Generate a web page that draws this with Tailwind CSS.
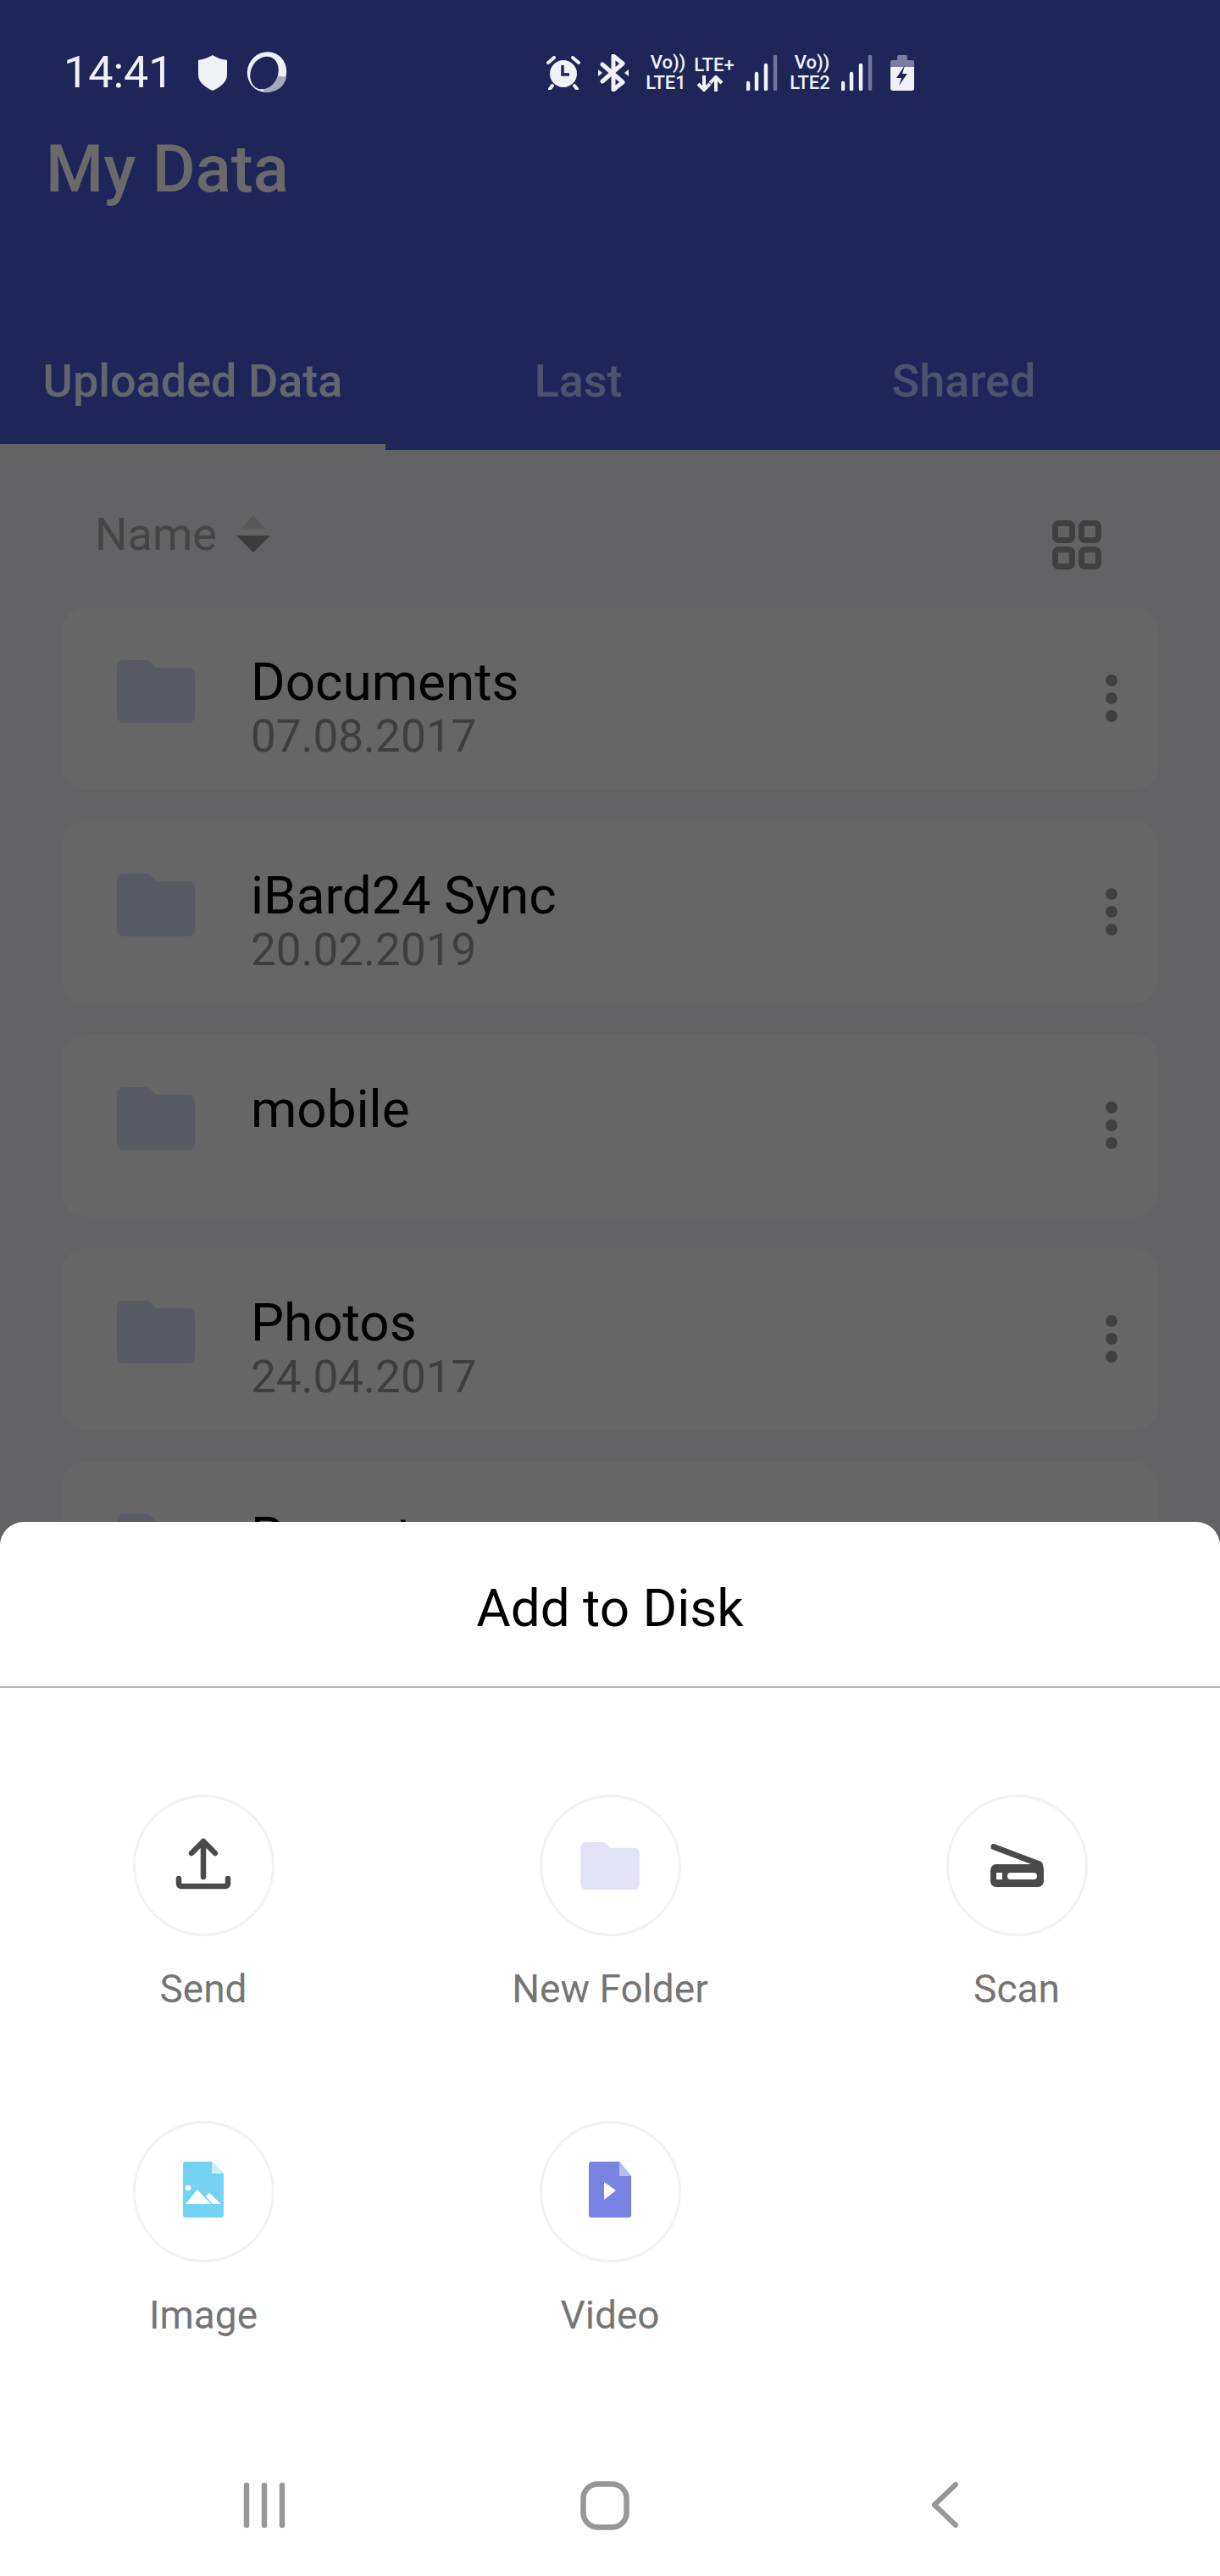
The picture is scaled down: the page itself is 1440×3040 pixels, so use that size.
<!DOCTYPE html>
<html lang="en">
<head>
    <meta charset="UTF-8">
    <meta name="viewport" content="width=device-width, initial-scale=1.0">
    <title>My Data</title>
    <script src="https://cdn.jsdelivr.net/npm/@tailwindcss/browser@4"></script>
</head>
<body class="relative w-[1440px] h-[3040px] overflow-hidden bg-[#636365] font-['Roboto',sans-serif]">

    <!-- header, dimmed by the sheet -->
    <header class="h-[531px] bg-[#1f2559] flex flex-col">
        <div class="h-[64px] mt-[54px] pl-[75px] flex items-center text-[#f1f2f8]">
            <span class="text-[52px] leading-none w-[159px]">14:41</span>
            <svg class="w-[34px] h-[42px]" viewBox="0 0 34 42" fill="#f1f2f8"><path d="M17 0c5 3 10 5 17 6v17c0 9-8 15-17 19C8 38 0 32 0 23V6c7-1 12-3 17-6z"/></svg>
            <svg class="ml-[21px] w-[50px] h-[50px]" viewBox="0 0 50 50">
                <ellipse cx="26" cy="24" rx="23" ry="24" transform="rotate(25 26 24)" fill="#eef0f7"/>
                <path d="M24 26L49 30C47 42 36 49 22 48z" fill="#a4a7c0"/>
                <ellipse cx="23" cy="25" rx="16" ry="20" transform="rotate(25 23 25)" fill="#1f2559"/>
            </svg>
            <div class="ml-[306px] flex items-center relative h-[64px]">
                <!-- alarm -->
                <svg class="w-[40px] h-[40px]" viewBox="0 0 40 40" fill="#f1f2f8">
                    <circle cx="20" cy="21" r="16"/>
                    <path d="M2 8l7-6M38 8l-7-6M7 35l-3 4M33 35l3 4" stroke="#f1f2f8" stroke-width="4" stroke-linecap="round"/>
                    <path d="M19 11v11h8" stroke="#1f2559" stroke-width="3.5" fill="none"/>
                </svg>
                <!-- bluetooth -->
                <svg class="ml-[21px] w-[36px] h-[44px]" viewBox="0 0 36 44" fill="none" stroke="#f1f2f8" stroke-width="5" stroke-linejoin="round" stroke-linecap="round">
                    <path d="M5 12l24 21-11 9V2l11 9L5 32"/>
                    <path d="M0 18v8l5-4zM36 18v8l-5-4z" fill="#f1f2f8" stroke="none"/>
                </svg>
                <div class="ml-[19px] w-[50px] flex flex-col items-center text-[22px] leading-[24px] font-medium whitespace-nowrap">
                    <span class="pl-[5px]">Vo))</span><span>LTE1</span>
                </div>
                <div class="ml-[8px] w-[48px] flex flex-col items-center text-[22px] leading-[24px] font-medium whitespace-nowrap">
                    <span>LTE+</span>
                    <svg class="w-[32px] h-[19px] self-start ml-[3px]" viewBox="0 0 32 19" fill="none" stroke="#f1f2f8" stroke-width="4"><path d="M9 0v16M2 10l7 7 7-7M23 19V3M16 9l7-7 7 7"/></svg>
                </div>
                <svg class="ml-[14px] w-[38px] h-[42px]" viewBox="0 0 38 42" stroke-width="4.5" stroke-linecap="round">
                    <path d="M2 33v7M12 22v18M23 12v28" stroke="#f1f2f8"/><path d="M34 2v38" stroke="#6f739b"/>
                </svg>
                <div class="ml-[11px] w-[52px] flex flex-col items-center text-[22px] leading-[24px] font-medium whitespace-nowrap">
                    <span class="pl-[5px]">Vo))</span><span>LTE2</span>
                </div>
                <svg class="ml-[11px] w-[38px] h-[42px]" viewBox="0 0 38 42" stroke-width="4.5" stroke-linecap="round">
                    <path d="M2 33v7M12 22v18M23 12v28" stroke="#f1f2f8"/><path d="M34 2v38" stroke="#6f739b"/>
                </svg>
                <!-- battery -->
                <svg class="ml-[20px] w-[28px] h-[42px]" viewBox="0 0 28 42">
                    <path d="M8 2a2 2 0 0 1 2-2h8a2 2 0 0 1 2 2v4h6a2 2 0 0 1 2 2v6H0V8a2 2 0 0 1 2-2h6z" fill="#7a7da0"/>
                    <path d="M0 14h28v25a3 3 0 0 1-3 3H3a3 3 0 0 1-3-3z" fill="#f1f2f8"/>
                    <path d="M17 12L7 27h6l-3 9 10-14h-6z" fill="#1f2559"/>
                </svg>
            </div>
        </div>
        <h1 class="ml-[54px] mt-[40px] text-[78px] leading-[84px] font-medium text-[#6a6a6a]">My Data</h1>
        <nav class="mt-auto relative h-[107px] flex text-[54px] font-medium text-[#4d5270]">
            <a class="w-[455px] text-center leading-[52px] text-[#63666e]">Uploaded Data</a>
            <a class="w-[455px] text-center leading-[52px]">Last</a>
            <a class="w-[455px] text-center leading-[52px]">Shared</a>
            <div class="absolute left-0 bottom-0 w-[455px] h-[7px] bg-[#636365]"></div>
        </nav>
    </header>

    <!-- file list -->
    <main class="px-[73px]">
        <div class="flex items-center h-[186px] pt-[12px] pl-[39px] pr-[67px]">
            <span class="text-[54px] text-[#454545]">Name</span>
            <svg class="ml-[23px] w-[40px] h-[44px]" viewBox="0 0 40 44">
                <path d="M20 0l14 16H6z" fill="#585858"/><path d="M0 24h40L20 44z" fill="#3c3c3c"/>
            </svg>
            <svg class="ml-auto mt-[26px] w-[58px] h-[58px]" viewBox="0 0 58 58" fill="none" stroke="#404040" stroke-width="7">
                <rect x="3.5" y="3.5" width="20" height="20" rx="4"/><rect x="34.5" y="3.5" width="20" height="20" rx="4"/>
                <rect x="3.5" y="34.5" width="20" height="20" rx="4"/><rect x="34.5" y="34.5" width="20" height="20" rx="4"/>
            </svg>
        </div>
        <ul class="flex flex-col gap-[37px]">
            <li class="relative h-[215px] rounded-[28px] bg-[#666666] pl-[65px] pr-[48px] pt-[62px] flex">
                <svg class="w-[92px] h-[74px] shrink-0" viewBox="0 0 92 74" fill="#585a64"><path d="M8 0h26c3 0 5 1 7 3l5 6h38a8 8 0 0 1 8 8v49a8 8 0 0 1-8 8H8a8 8 0 0 1-8-8V8a8 8 0 0 1 8-8z"/></svg>
                <div class="ml-[66px] flex-1 -mt-[11px]">
                    <div class="text-[62px] leading-[74px] text-black">Documents</div>
                    <div class="text-[53px] leading-[54px] text-[#3e3e3e]">07.08.2017</div>
                </div>
                <div class="w-[14px] flex flex-col gap-[7px] pt-[17px]">
                    <i class="block h-[14px] rounded-full bg-[#404040]"></i><i class="block h-[14px] rounded-full bg-[#404040]"></i><i class="block h-[14px] rounded-full bg-[#404040]"></i>
                </div>
            </li>
            <li class="relative h-[215px] rounded-[28px] bg-[#666666] pl-[65px] pr-[48px] pt-[62px] flex">
                <svg class="w-[92px] h-[74px] shrink-0" viewBox="0 0 92 74" fill="#585a64"><path d="M8 0h26c3 0 5 1 7 3l5 6h38a8 8 0 0 1 8 8v49a8 8 0 0 1-8 8H8a8 8 0 0 1-8-8V8a8 8 0 0 1 8-8z"/></svg>
                <div class="ml-[66px] flex-1 -mt-[11px]">
                    <div class="text-[62px] leading-[74px] text-black">iBard24 Sync</div>
                    <div class="text-[53px] leading-[54px] text-[#3e3e3e]">20.02.2019</div>
                </div>
                <div class="w-[14px] flex flex-col gap-[7px] pt-[17px]">
                    <i class="block h-[14px] rounded-full bg-[#404040]"></i><i class="block h-[14px] rounded-full bg-[#404040]"></i><i class="block h-[14px] rounded-full bg-[#404040]"></i>
                </div>
            </li>
            <li class="relative h-[215px] rounded-[28px] bg-[#666666] pl-[65px] pr-[48px] pt-[62px] flex">
                <svg class="w-[92px] h-[74px] shrink-0" viewBox="0 0 92 74" fill="#585a64"><path d="M8 0h26c3 0 5 1 7 3l5 6h38a8 8 0 0 1 8 8v49a8 8 0 0 1-8 8H8a8 8 0 0 1-8-8V8a8 8 0 0 1 8-8z"/></svg>
                <div class="ml-[66px] flex-1 -mt-[11px]">
                    <div class="text-[62px] leading-[74px] text-black">mobile</div>
                </div>
                <div class="w-[14px] flex flex-col gap-[7px] pt-[17px]">
                    <i class="block h-[14px] rounded-full bg-[#404040]"></i><i class="block h-[14px] rounded-full bg-[#404040]"></i><i class="block h-[14px] rounded-full bg-[#404040]"></i>
                </div>
            </li>
            <li class="relative h-[215px] rounded-[28px] bg-[#666666] pl-[65px] pr-[48px] pt-[62px] flex">
                <svg class="w-[92px] h-[74px] shrink-0" viewBox="0 0 92 74" fill="#585a64"><path d="M8 0h26c3 0 5 1 7 3l5 6h38a8 8 0 0 1 8 8v49a8 8 0 0 1-8 8H8a8 8 0 0 1-8-8V8a8 8 0 0 1 8-8z"/></svg>
                <div class="ml-[66px] flex-1 -mt-[11px]">
                    <div class="text-[62px] leading-[74px] text-black">Photos</div>
                    <div class="text-[53px] leading-[54px] text-[#3e3e3e]">24.04.2017</div>
                </div>
                <div class="w-[14px] flex flex-col gap-[7px] pt-[17px]">
                    <i class="block h-[14px] rounded-full bg-[#404040]"></i><i class="block h-[14px] rounded-full bg-[#404040]"></i><i class="block h-[14px] rounded-full bg-[#404040]"></i>
                </div>
            </li>
            <li class="relative h-[215px] rounded-[28px] bg-[#666666] pl-[65px] pr-[48px] pt-[62px] flex">
                <svg class="w-[92px] h-[74px] shrink-0" viewBox="0 0 92 74" fill="#585a64"><path d="M8 0h26c3 0 5 1 7 3l5 6h38a8 8 0 0 1 8 8v49a8 8 0 0 1-8 8H8a8 8 0 0 1-8-8V8a8 8 0 0 1 8-8z"/></svg>
                <div class="ml-[66px] flex-1 -mt-[11px]">
                    <div class="text-[62px] leading-[74px] text-black">Recent</div>
                </div>
            </li>
        </ul>
    </main>

    <!-- bottom sheet -->
    <section class="absolute left-0 right-0 bottom-0 h-[1244px] bg-white rounded-t-[28px] flex flex-col">
        <h2 class="h-[196px] shrink-0 pt-[8px] border-b-2 border-[#b8b8b8] flex items-center justify-center text-[62px] text-black">Add to Disk</h2>
        <div class="grid grid-cols-3 pt-[126px]">
            <div class="h-[385px] flex flex-col items-center">
                <div class="w-[167px] h-[167px] rounded-full border-[3px] border-[#f2f2f2] flex items-center justify-center">
                    <svg class="w-[66px] h-[66px]" viewBox="0 0 66 66" fill="none" stroke="#4a4a4a" stroke-width="6.5" stroke-linecap="round" stroke-linejoin="round">
                        <path d="M19 18L33 4l14 14M33 4v42M4 48v6a3 3 0 0 0 3 3h52a3 3 0 0 0 3-3v-6"/>
                    </svg>
                </div>
                <span class="mt-[35px] text-[46px] leading-[54px] text-[#757575]">Send</span>
            </div>
            <div class="h-[385px] flex flex-col items-center">
                <div class="w-[167px] h-[167px] rounded-full border-[3px] border-[#f2f2f2] flex items-center justify-center">
                    <svg class="w-[70px] h-[56px]" viewBox="0 0 92 74" fill="#e2e3f6"><path d="M8 0h26c3 0 5 1 7 3l5 6h38a8 8 0 0 1 8 8v49a8 8 0 0 1-8 8H8a8 8 0 0 1-8-8V8a8 8 0 0 1 8-8z"/></svg>
                </div>
                <span class="mt-[35px] text-[46px] leading-[54px] text-[#757575]">New Folder</span>
            </div>
            <div class="h-[385px] flex flex-col items-center">
                <div class="w-[167px] h-[167px] rounded-full border-[3px] border-[#f2f2f2] flex items-center justify-center">
                    <svg class="w-[64px] h-[52px]" viewBox="0 0 64 52">
                        <path d="M5 3.5L59 24" stroke="#4a4a4a" stroke-width="7" stroke-linecap="round"/>
                        <path d="M8 24h55l1 6v14a7 7 0 0 1-7 7H8a7 7 0 0 1-7-7V31a7 7 0 0 1 7-7z" fill="#4a4a4a"/>
                        <rect x="8" y="34" width="7" height="8" fill="#fff"/><rect x="21" y="34" width="35" height="8" rx="4" fill="#fff"/>
                    </svg>
                </div>
                <span class="mt-[35px] text-[46px] leading-[54px] text-[#757575]">Scan</span>
            </div>
            <div class="h-[385px] flex flex-col items-center">
                <div class="w-[167px] h-[167px] rounded-full border-[3px] border-[#f2f2f2] flex items-center justify-center">
                    <svg class="w-[48px] h-[66px] mb-[6px]" viewBox="0 0 48 66">
                        <path d="M3 0h31l14 14v49a3 3 0 0 1-3 3H3a3 3 0 0 1-3-3V3a3 3 0 0 1 3-3z" fill="#74d2f3"/>
                        <path d="M34 0l14 14H34z" fill="#c9effb"/>
                        <circle cx="6" cy="31" r="3.3" fill="#fff"/>
                        <path d="M3 50l14-17 16 17zM27 41l4-4 14 13H35z" fill="#fff"/>
                    </svg>
                </div>
                <span class="mt-[35px] text-[46px] leading-[54px] text-[#757575]">Image</span>
            </div>
            <div class="h-[385px] flex flex-col items-center">
                <div class="w-[167px] h-[167px] rounded-full border-[3px] border-[#f2f2f2] flex items-center justify-center">
                    <svg class="w-[50px] h-[66px] mb-[6px]" viewBox="0 0 50 66">
                        <path d="M3 0h33l14 17v46a3 3 0 0 1-3 3H3a3 3 0 0 1-3-3V3a3 3 0 0 1 3-3z" fill="#7983e2"/>
                        <path d="M36 0l14 17H36z" fill="#b7bcf1"/>
                        <path d="M18 24l14 10-14 11z" fill="#fff"/>
                    </svg>
                </div>
                <span class="mt-[35px] text-[46px] leading-[54px] text-[#757575]">Video</span>
            </div>
        </div>
        <!-- android nav bar -->
        <div class="absolute left-0 right-0 bottom-[55px] h-[57px]">
            <div class="grid grid-cols-3 h-full">
                <svg class="w-[50px] h-[57px] ml-[287px]" viewBox="0 0 50 57" stroke="#979797" stroke-width="6.5" stroke-linecap="round">
                    <path d="M4 5v47M25 5v47M46 5v47"/>
                </svg>
                <svg class="w-[58px] h-[58px] ml-[205px]" viewBox="0 0 58 58" fill="none" stroke="#979797" stroke-width="6.5">
                    <rect x="3.5" y="3.5" width="51" height="51" rx="17"/>
                </svg>
                <svg class="w-[34px] h-[56px] ml-[139px]" viewBox="0 0 34 56" fill="none" stroke="#979797" stroke-width="6" stroke-linecap="round" stroke-linejoin="round">
                    <path d="M29 4L4 28l25 24"/>
                </svg>
            </div>
        </div>
    </section>
</body>
</html>
